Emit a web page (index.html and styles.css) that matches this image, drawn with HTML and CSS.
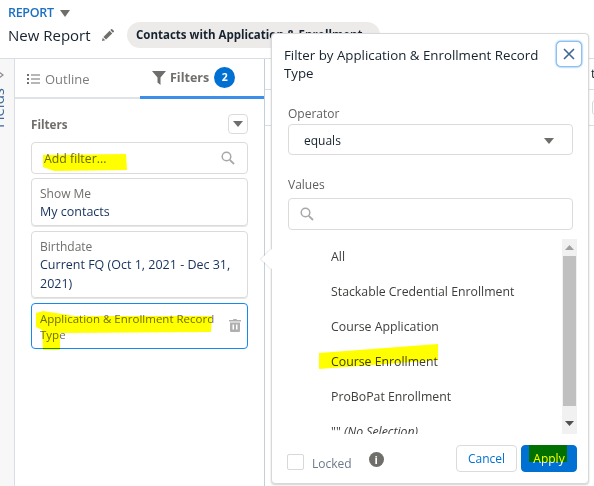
FILE: index.html
```html
<!DOCTYPE html>
<html lang="en">
<head>
<meta charset="utf-8">
<title>New Report</title>
<link rel="stylesheet" href="styles.css">
</head>
<body>
<div class="page">
  <header class="header">
    <div class="crumb"><span class="crumb-text">REPORT</span><svg class="crumb-caret" width="10" height="7" viewBox="0 0 10 7"><path d="M0 0h10L5 7z"/></svg></div>
    <div class="title-row">
      <h1 class="report-name">New Report</h1>
      <svg class="pencil" width="12" height="12" viewBox="0 0 12 12"><path d="M0 12l.7-3.2L3.2 11.300zM1.400 8L7.600 1.800l2.600 2.600L4 10.600zM8.300 1.100L9.200.2a.7.7 0 0 1 1 0l1.600 1.600a.7.7 0 0 1 0 1l-.9.9z"/></svg>
      <div class="pill">Contacts with Application &amp; Enrollment</div>
    </div>
  </header>
  <main class="main">
    <aside class="strip">
      <svg class="strip-chevron" width="7" height="8" viewBox="0 0 7 8"><path d="M1 1l4 3-4 3" fill="none" stroke="#8a8a8a" stroke-width="1.200"/></svg>
      <span class="strip-label">Fields</span>
    </aside>
    <section class="panel">
      <nav class="tabs">
        <div class="tab">
          <svg width="13" height="10" viewBox="0 0 13 10"><path d="M0 0h2v2H0zM0 4h2v2H0zM0 8h2v2H0zM4 .5h9v1H4zM4 4.500h9v1H4zM4 8.500h9v1H4z" fill="#706e6b"/></svg>
          <span>Outline</span>
        </div>
        <div class="tab tab-active">
          <svg width="14" height="14" viewBox="0 0 14 14"><path d="M0 0h14L8.500 6.500V14L5.500 11.500V6.500z" fill="#706e6b"/></svg>
          <span>Filters</span>
          <span class="badge">2</span>
        </div>
      </nav>
      <div class="panel-body">
        <div class="panel-head">
          <span class="panel-title">Filters</span>
          <button class="mini-btn"><svg width="10" height="6" viewBox="0 0 10 6"><path d="M0 0h10L5 6z" fill="#706e6b"/></svg></button>
        </div>
        <div class="add-filter">
          <span>Add filter...</span>
          <svg width="14" height="14" viewBox="0 0 14 14"><circle cx="5.500" cy="5.500" r="4.300" fill="none" stroke="#a8a8a8" stroke-width="1.500"/><path d="M8.800 8.800L13 13" stroke="#a8a8a8" stroke-width="1.800"/></svg>
        </div>
        <div class="card">
          <div class="card-label">Show Me</div>
          <div class="card-value">My contacts</div>
        </div>
        <div class="card">
          <div class="card-label">Birthdate</div>
          <div class="card-value">Current FQ (Oct 1, 2021 - Dec 31, 2021)</div>
        </div>
        <div class="card card-selected">
          <div class="card-name">Application &amp; Enrollment Record Type</div>
          <svg class="trash" width="12" height="13" viewBox="0 0 12 13"><path fill-rule="evenodd" d="M4.500 0h3l.5 1h4v1.500H0V1h4zM1 3.500h10V12a1 1 0 0 1-1 1H2a1 1 0 0 1-1-1zM3.500 5.500v5h1.500v-5zM7 5.500v5h1.500v-5z" fill="#b0b0b0"/></svg>
        </div>
      </div>
    </section>
    <section class="canvas">
      <div class="canvas-row canvas-row-a">t</div>
      <div class="canvas-row canvas-row-b"><span class="canvas-box"></span></div>
    </section>
  </main>

  <div class="popover">
    <span class="notch"></span>
    <div class="pop-head">
      <h2 class="pop-title">Filter by Application &amp; Enrollment Record Type</h2>
      <button class="close"><svg width="12" height="12" viewBox="0 0 12 12"><path d="M1 1l10 10M11 1L1 11" stroke="#3f6796" stroke-width="1.600" fill="none"/></svg></button>
    </div>
    <div class="pop-body">
      <label class="field-label">Operator</label>
      <div class="select"><span>equals</span><svg width="10" height="6" viewBox="0 0 10 6"><path d="M0 0h10L5 6z" fill="#706e6b"/></svg></div>
      <label class="field-label field-label-values">Values</label>
      <div class="search"><svg width="14" height="14" viewBox="0 0 14 14"><circle cx="5.500" cy="5.500" r="4.300" fill="none" stroke="#a8a8a8" stroke-width="1.500"/><path d="M8.800 8.800L13 13" stroke="#a8a8a8" stroke-width="1.800"/></svg></div>
      <div class="listbox">
        <ul class="options">
          <li>All</li>
          <li>Stackable Credential Enrollment</li>
          <li>Course Application</li>
          <li>Course Enrollment</li>
          <li>ProBoPat Enrollment</li>
          <li>"" <em>(No Selection)</em></li>
        </ul>
        <div class="scrollbar">
          <svg class="arrow-up" width="9" height="5" viewBox="0 0 9 5"><path d="M0 5h9L4.500 0z" fill="#a0a0a0"/></svg>
          <span class="thumb"></span>
          <svg class="arrow-down" width="9" height="5" viewBox="0 0 9 5"><path d="M0 0h9L4.500 5z" fill="#505050"/></svg>
        </div>
      </div>
    </div>
    <div class="pop-foot">
      <span class="checkbox"></span>
      <span class="locked">Locked</span>
      <span class="info">i</span>
      <button class="btn btn-cancel">Cancel</button>
      <button class="btn btn-apply">Apply</button>
    </div>
  </div>

  <svg class="marker" width="594" height="486" viewBox="0 0 594 486">
    <path d="M43 155L126 154L127 170L54 171L43 167z"/>
    <path d="M36 313L43 311L75 316L212 316L211 332L60 333L60 350L43 350L42 330L36 327z"/>
    <path d="M319 353L438 344L438 360L319 369z"/>
    <path d="M529 445H567V462H529z"/>
  </svg>
</div>
</body>
</html>
```
FILE: styles.css
```css
* { box-sizing: border-box; }
html, body { margin: 0; padding: 0; }
body { font-family: "Open Sans", "Noto Sans", sans-serif; color: #16325c; background: #fff; }
.page { position: relative; width: 594px; height: 486px; overflow: hidden; display: flex; flex-direction: column; }

.header { height: 59px; padding: 5px 0 0 8px; flex: none; border-bottom: 1px solid #d8dde6; }
.crumb { display: flex; align-items: center; gap: 6px; height: 16px; }
.crumb-text { font-size: 12.500px; font-weight: 600; color: #1b6fc4; line-height: 16px; letter-spacing: -.3px; }
.crumb-caret { fill: #706e6b; }
.title-row { display: flex; align-items: center; margin-top: 1px; height: 26px; }
.report-name { margin: 0; font-size: 15px; font-weight: 400; color: #16222e; line-height: 26px; width: 94px; white-space: nowrap; }
.pencil { fill: #706e6b; flex: none; }
.pill { margin-left: 13px; width: 253px; height: 26px; padding-left: 9px; border-radius: 13px; background: #ecebea; font-size: 11.500px; font-weight: 700; color: #16222e; line-height: 26px; white-space: nowrap; overflow: hidden; }

.main { flex: 1; display: flex; min-height: 0; }
.strip { width: 15px; flex: none; background: #f7f7f7; border-right: 1px solid #d8dde6; position: relative; overflow: hidden; padding-top: 12px; }
.strip-chevron { display: block; margin-left: -2px; }
.strip-label { position: absolute; top: 29px; left: -9px; writing-mode: vertical-rl; transform: rotate(180deg); font-size: 15px; line-height: 15px; color: #3f6a9c; }

.panel { width: 250px; flex: none; border-right: 1px solid #c3d0dc; }
.tabs { display: flex; height: 40px; border-bottom: 2px solid #dfe3e8; }
.tab { display: flex; align-items: center; gap: 5px; height: 40px; font-size: 13px; color: #7d7d7d; }
.tab:first-child { width: 125px; padding-left: 12px; }
.tab-active { width: 124px; padding-left: 12px; gap: 4px; font-size: 12.500px; font-weight: 700; color: #706e6b; border-bottom: 3px solid #3b8fe8; }
.badge { width: 21px; height: 21px; border-radius: 50%; background: #0070d2; color: #fff; font-size: 10.500px; line-height: 21px; text-align: center; margin-left: 1px; }

.panel-body { padding: 15px 16px 0; }
.panel-head { display: flex; justify-content: space-between; align-items: center; height: 20px; margin-bottom: 8px; }
.panel-title { font-size: 11.700px; font-weight: 700; color: #706e6b; }
.mini-btn { width: 20px; height: 20px; padding: 0; display: flex; align-items: center; justify-content: center; background: #fff; border: 1px solid #dddbda; border-radius: 4px; }
.add-filter { height: 32px; border: 1px solid #dddbda; border-radius: 4px; display: flex; align-items: center; justify-content: space-between; padding: 0 12px; font-size: 12.300px; color: #6b6b5e; }
.card { margin-top: 4px; padding: 7px 9px 4px 8px; border: 1px solid #dddbda; border-radius: 4px; box-shadow: 0 1px 0 #e6e6e6; }
.card + .card { margin-top: 5px; }
.card-label { font-size: 12px; line-height: 16px; color: #706e6b; }
.card-value { font-size: 12.500px; line-height: 19px; color: #16325c; }
.card-selected { position: relative; border-color: #1589ee; padding: 7px 30px 5px 8px; height: 46px; box-shadow: none; }
.card-name { font-size: 11.500px; line-height: 16px; color: #706e6b; }
.trash { position: absolute; right: 6px; top: 15px; }

.canvas { flex: 1; overflow: hidden; }
.canvas-row { border-bottom: 1px solid #d8dde6; }
.canvas-row-a { height: 31px; padding: 6px 0 0 326px; font-size: 12.500px; line-height: 18px; color: #16222e; }
.canvas-row-b { height: 36px; padding: 10px 0 0 327px; }
.canvas-box { display: block; width: 10px; height: 15px; border: 1px solid #d8d8d8; border-radius: 3px; }

.popover { position: absolute; left: 271px; top: 33px; width: 318px; height: 451px; background: #fff; border: 1px solid #d8d8d8; border-radius: 4px; box-shadow: 0 1px 2px rgba(0,0,0,.18); }
.notch { position: absolute; left: -8px; top: 218px; width: 14px; height: 14px; background: #fff; transform: rotate(45deg); box-shadow: -1px 1px 1px rgba(0,0,0,.08); }
.pop-head { position: relative; display: flex; padding: 12px 6px 0 12px; height: 63px; }
.pop-title { margin: 0; width: 262px; font-size: 13.300px; font-weight: 400; line-height: 18px; color: #16222e; }
.close { position: absolute; right: 6px; top: 7px; width: 26px; height: 26px; padding: 0; display: flex; align-items: center; justify-content: center; background: #fff; border: 1px solid #8fc0f0; border-radius: 5px; box-shadow: 0 0 2px #1589ee; }
.pop-body { padding: 0 15px 0 16px; position: relative; }
.field-label { display: block; font-size: 12px; line-height: 17px; height: 27px; padding-top: 8px; color: #5f5f5f; }
.field-label-values { height: 43px; padding-top: 21px; }
.select { height: 31px; border: 1px solid #dddbda; border-radius: 4px; display: flex; align-items: center; justify-content: space-between; padding: 2px 18px 0 15px; font-size: 12px; color: #16222e; }
.search { height: 32px; border: 1px solid #dddbda; border-radius: 4px; display: flex; align-items: center; padding-left: 11px; }
.listbox { display: flex; height: 195px; margin-top: 9px; margin-right: -4px; overflow: hidden; }
.options { flex: 1; margin: 0; padding: 0 0 0 43px; list-style: none; overflow: hidden; }
.options li { height: 35px; font-size: 12.300px; line-height: 35px; color: #3e3e3c; white-space: nowrap; }
.scrollbar { width: 15px; flex: none; background: #f1f1f1; display: flex; flex-direction: column; align-items: flex-start; padding: 6px 1px 0; }
.arrow-up, .arrow-down { margin-left: 2px; flex: none; }
.thumb { width: 13px; height: 150px; margin-top: 6px; background: #c0c0c0; flex: none; }
.arrow-down { margin-top: 15px; }
.pop-foot { position: absolute; left: 15px; right: 11px; bottom: 11px; height: 28px; display: flex; align-items: center; }
.checkbox { width: 17px; height: 16px; margin-top: 8px; border: 1px solid #d8d8d8; border-radius: 2px; background: #fff; }
.locked { margin: 10px 0 0 8px; font-size: 12px; color: #6b7a8c; }
.info { width: 15px; height: 15px; margin: 3px 0 0 17px; border-radius: 50%; background: #706e6b; color: #fff; font-size: 11px; font-weight: 700; line-height: 15px; text-align: center; }
.btn { height: 27px; border-radius: 4px; font-family: inherit; font-size: 12px; padding: 0; }
.btn-cancel { width: 61px; margin-left: auto; background: #fff; border: 1px solid #dddbda; color: #0070d2; }
.btn-apply { width: 56px; margin-left: 4px; background: #0070d2; border: 1px solid #0070d2; color: #fff; }

.marker { position: absolute; left: 0; top: 0; fill: #ffff00; mix-blend-mode: multiply; pointer-events: none; }
```
